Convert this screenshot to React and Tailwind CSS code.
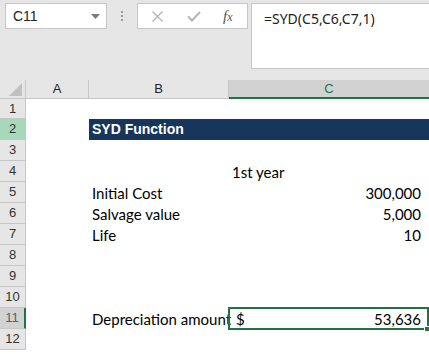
import React from "react";

const rowDefs = [
  { n: 1, h: 20 },
  { n: 2, h: 21 },
  { n: 3, h: 21 },
  { n: 4, h: 21 },
  { n: 5, h: 21 },
  { n: 6, h: 21 },
  { n: 7, h: 21 },
  { n: 8, h: 21 },
  { n: 9, h: 21 },
  { n: 10, h: 21 },
  { n: 11, h: 21 },
  { n: 12, h: 21 },
];

const uiFont = { fontFamily: '"Liberation Sans", Arial, sans-serif' };
const cellFont = { fontFamily: 'Lato, "Liberation Sans", sans-serif' };

function RowHeader({ n, h }) {
  let cls =
    "w-[26px] shrink-0 flex items-center justify-center border-b border-r border-[#c6c6c6] text-[13px] text-[#333] bg-[#e6e6e6]";
  if (n === 2) cls =
    "w-[26px] shrink-0 flex items-center justify-center border-b border-r border-[#c6c6c6] text-[13px] text-[#333] bg-[#a8d8ba]";
  if (n === 11) cls =
    "w-[26px] shrink-0 flex items-center justify-center border-b border-[#c6c6c6] border-r-2 border-r-[#217346] text-[13px] text-[#4a6b57] bg-[#d2d2d2]";
  return (
    <div className={cls} style={{ ...uiFont, height: h }}>
      {n}
    </div>
  );
}

function Row({ n, h }) {
  let b = null;
  let c = null;
  let bCls = "w-[140px] shrink-0 flex items-center pl-[3px] pt-[1px] text-[15px] text-black whitespace-nowrap";
  let cCls = "flex-1 flex items-center pt-[1px] text-[15px] text-black relative";
  if (n === 2) {
    bCls = "w-[140px] shrink-0 flex items-center pl-[3px] bg-[#16365c] text-white font-bold text-[14px] whitespace-nowrap";
    cCls = "flex-1 bg-[#16365c]";
    b = <span style={uiFont}>SYD Function</span>;
  }
  if (n === 4) c = <span className="pl-[3px]">1st year</span>;
  if (n === 5) { b = "Initial Cost"; c = <span className="ml-auto pr-[8px]">300,000</span>; }
  if (n === 6) { b = "Salvage value"; c = <span className="ml-auto pr-[8px]">5,000</span>; }
  if (n === 7) { b = "Life"; c = <span className="ml-auto pr-[8px]">10</span>; }
  if (n === 11) {
    b = "Depreciation amount";
    c = (
      <>
        <span className="pl-[7px]">$</span>
        <span className="ml-auto pr-[8px]">53,636</span>
        <div className="absolute left-[-1px] top-[-1px] right-0 bottom-[-1px] border-2 border-[#217346]" />
        <div className="absolute right-[-1px] bottom-[-3px] w-[6px] h-[6px] bg-[#217346] border border-white" />
      </>
    );
  }
  return (
    <div className="flex" style={{ height: h }}>
      <RowHeader n={n} h={h} />
      <div className="w-[63px] shrink-0" />
      <div className={bCls} style={n === 2 ? undefined : cellFont}>{b}</div>
      <div className={cCls} style={cellFont}>{c}</div>
    </div>
  );
}

export default function App() {
  return (
    <div className="w-[429px] h-[354px] overflow-hidden bg-white relative" style={uiFont}>
      {/* formula bar area */}
      <div className="h-[80px] bg-[#e6e6e6] flex items-start pt-[3px] pl-[5px]">
        <div className="w-[102px] h-[26px] bg-white border border-[#c6c6c6] flex items-center pl-[7px] pr-[6px]">
          <span className="text-[14px] text-[#222]">C11</span>
          <svg className="ml-auto" width="9" height="5" viewBox="0 0 9 5">
            <polygon points="0,0 9,0 4.5,5" fill="#7a7a7a" />
          </svg>
        </div>
        <div className="w-[30px] h-[26px] flex flex-col items-center justify-center gap-[2px]">
          <div className="w-[2px] h-[2px] bg-[#9a9a9a]" />
          <div className="w-[2px] h-[2px] bg-[#9a9a9a]" />
          <div className="w-[2px] h-[2px] bg-[#9a9a9a]" />
        </div>
        <div className="w-[111px] h-[26px] bg-white border border-[#c6c6c6] flex items-center">
          <svg className="ml-[14px]" width="11" height="11" viewBox="0 0 11 11">
            <path d="M0.5 0.5 L10.5 10.5 M10.5 0.5 L0.5 10.5" stroke="#b4b4b4" strokeWidth="1.3" />
          </svg>
          <svg className="ml-[24px]" width="14" height="11" viewBox="0 0 14 11">
            <path d="M1 5.5 L5 9.5 L13 1" stroke="#b4b4b4" strokeWidth="2" fill="none" />
          </svg>
          <span
            className="ml-[22px] text-[15px] italic text-[#555]"
            style={{ fontFamily: '"Liberation Serif", "Times New Roman", serif' }}
          >
            f<span className="text-[12px]">x</span>
          </span>
        </div>
        <div className="ml-[3px] flex-1 h-[66px] bg-white border border-[#c6c6c6] border-r-0 pl-[12px] pt-[3px]">
          <span className="text-[14px] text-[#222]" style={{ fontFamily: '"Noto Sans", "Liberation Sans", sans-serif' }}>
            =SYD(C5,C6,C7,1)
          </span>
        </div>
      </div>
      {/* column headers */}
      <div className="flex h-[19px] bg-[#e6e6e6]">
        <div className="w-[26px] shrink-0 border-r border-b border-[#c6c6c6] flex items-end justify-end pr-[3px] pb-[2px]">
          <svg width="13" height="13" viewBox="0 0 13 13">
            <polygon points="13,0 13,13 0,13" fill="#c0c0c0" />
          </svg>
        </div>
        <div className="w-[63px] shrink-0 border-r border-b border-[#c6c6c6] flex items-center justify-center text-[13px] text-[#222]">A</div>
        <div className="w-[140px] shrink-0 border-r border-b border-[#c6c6c6] flex items-center justify-center text-[13px] text-[#222]">B</div>
        <div className="flex-1 bg-[#d2d2d2] border-b-2 border-[#217346] flex items-center justify-center text-[13px] text-[#217346]">C</div>
      </div>
      {rowDefs.map((r) => (
        <Row key={r.n} n={r.n} h={r.h} />
      ))}
    </div>
  );
}
